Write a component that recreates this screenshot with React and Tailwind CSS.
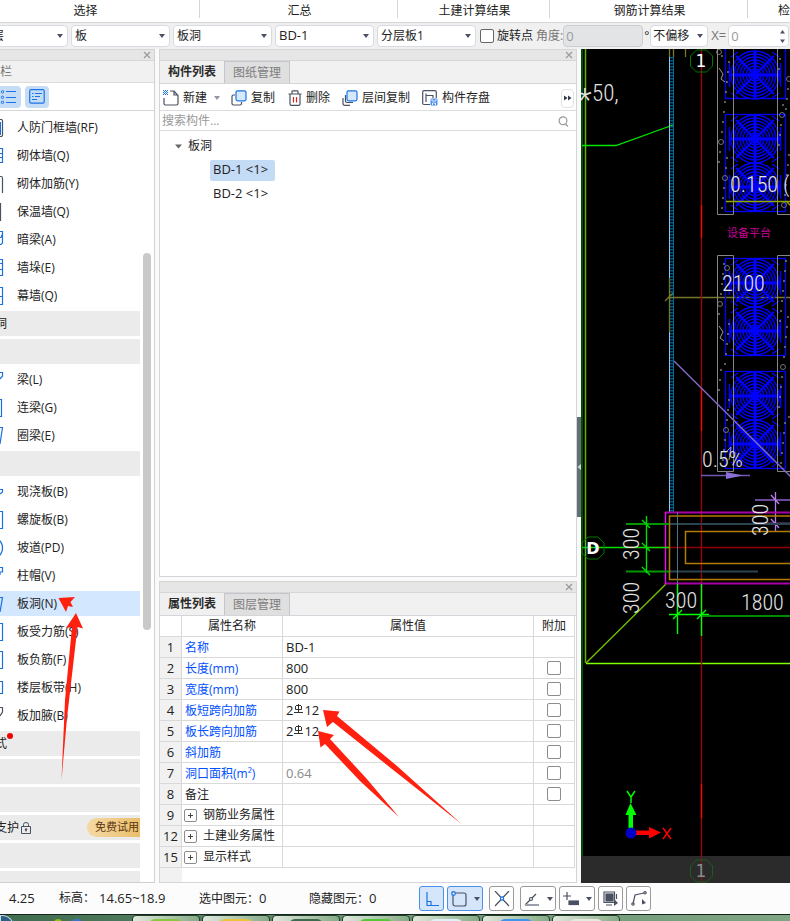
import React from "react";

const ribbonGroups = [
  { label: "选择", box: "w-[200px] pr-[28px] justify-center border-r" },
  { label: "汇总", box: "w-[198px] pl-[2px] justify-center border-r" },
  { label: "土建计算结果", box: "w-[152px] pl-[2px] justify-center border-r" },
  { label: "钢筋计算结果", box: "w-[198px] pl-[2px] justify-center border-r" },
  { label: "检", box: "flex-1 pl-[30px] justify-start" },
];

function Caret({ className = "" }) {
  return (
    <svg width="6" height="4" viewBox="0 0 6 4" className={`shrink-0 pointer-events-none ${className}`}>
      <path d="M0 0H6L3 4Z" fill="#4a5162" />
    </svg>
  );
}

function Combo({ label, value, box = "w-[99px]", pad = "pl-[3px]", latin = false }) {
  return (
    <span className={`relative flex h-[22px] shrink-0 items-center rounded border border-[#d8dbe2] bg-white ${box}`}>
      <select
        aria-label={label}
        defaultValue={value}
        className={`h-full w-full appearance-none bg-transparent pr-4 text-[#222] outline-none ${pad} ${latin ? "text-[13px]" : "text-xs"}`}
      >
        <option>{value}</option>
      </select>
      <Caret className="absolute right-[4px]" />
    </span>
  );
}

function CloseMark() {
  return (
    <button aria-label="关闭" className="flex h-full w-[14px] items-center justify-center">
      <svg width="8" height="8" viewBox="0 0 8 8">
        <path d="M1 1L7 7M7 1L1 7" stroke="#999" strokeWidth="1.2" />
      </svg>
    </button>
  );
}

function TitleStrip() {
  return (
    <div className="flex h-[12px] shrink-0 items-center justify-end border-y border-[#d6d6d6] bg-[#e6e6e6]">
      <CloseMark />
    </div>
  );
}

function Tabs({ items }) {
  return (
    <div className="flex h-[23px] shrink-0 border-b border-[#d4d5da] bg-[#f1f1f1]">
      <button className="w-[65px] border-r border-[#c4c5cc] bg-[#f0f0f0] text-xs font-bold text-[#2b2b2b]">{items[0]}</button>
      <button className="w-[65px] border-t border-r border-[#c4c5cc] bg-[#dfdfdf] text-xs text-[#7d7d7d]">{items[1]}</button>
    </div>
  );
}

/* ---------- Navigation tree ---------- */

const B = "#1a6fe0";
const D = "#4a5162";
const navRows = [
  { t: "人防门框墙(RF)", c: D, d: "M-2 .5H1Q2.500 .5 2.500 2V16Q2.500 17.500 1 17.500H-2", bar: true },
  { t: "砌体墙(Q)", c: B, d: "M-2 1.500H2.500V15.500H-2M-2 6.500H2.500M-2 10.500H2.500" },
  { t: "砌体加筋(Y)", c: D, d: "M-2 1.500H1Q2.500 1.500 2.500 3V18" },
  { t: "保温墙(Q)", c: D, d: "M.5 0V18" },
  { t: "暗梁(A)", c: B, d: "M-2 .5H2.500V8M-2 6.500H1L2.500 3M-2 13.500H1L2.500 12V8" },
  { t: "墙垛(E)", c: B, d: "M-2 .5H2.500V16.500H-2M-2 4.500H2.500M-2 10.500H2.500" },
  { t: "幕墙(Q)", c: B, d: "M-2 .5H2.500V17.500H-2M-2 9.500H2.500" },
  { g: "洞" },
  { g: "" },
  { t: "梁(L)", c: B, d: "M-2 1.500H2.500V5L0 8" },
  { t: "连梁(G)", c: B, d: "M-2 .5H1.500V17.500H-2" },
  { t: "圈梁(E)", c: B, d: "M-2 .5H2.500L0 17" },
  { g: "" },
  { t: "现浇板(B)", c: B, d: "M-2 6.500H2.500V9L0 11" },
  { t: "螺旋板(B)", c: B, d: "M-2 .5H2.500V17.500H-2" },
  { t: "坡道(PD)", c: B, d: "M-1 1Q2.500 4 2.500 9T-1 17" },
  { t: "柱帽(V)", c: B, d: "M-2 .5H2.500V5H0V8" },
  { t: "板洞(N)", c: B, d: "M-2 2.500H2.500L0 17", on: true },
  { t: "板受力筋(S)", c: B, d: "M-2 .5H2.500V17.500H-2" },
  { t: "板负筋(F)", c: B, d: "M-2 .5H2.500V17.500H-2" },
  { t: "楼层板带(H)", c: B, d: "M-2 2.500H2.500V14.500H-2" },
  { t: "板加腋(B)", c: D, d: "M-2 .5H2.500V5L0 9" },
  { g: "式", dot: true },
  { g: "" },
  { g: "" },
  { g: "支护", lock: true },
  { g: "" },
  { g: "" },
];

function NavRow({ row }) {
  if (row.g !== undefined) {
    return (
      <li className="mb-[3px] flex h-[25px] shrink-0 items-center overflow-hidden bg-[#ebebeb]">
        <button className="relative -ml-[5px] flex h-full flex-1 items-center text-left">
          {row.g}
          {row.dot && <span className="absolute left-[12px] top-[2px] h-[6px] w-[6px] rounded-full bg-[#f00000]" />}
          {row.lock && (
            <svg width="10" height="12" viewBox="0 0 10 12" className="ml-[2px]">
              <path d="M.5 4.500H9.500V11.500H.5ZM2.500 4.500V2.500Q2.500 .5 5 .5T7.500 2.500V4.500M5 7V9.500" fill="none" stroke={D} />
              <circle cx="5" cy="7.500" r="1.200" fill={D} />
            </svg>
          )}
        </button>
        {row.lock && (
          <button className="h-[19px] w-[53px] rounded-l-full bg-linear-to-r from-[#f5d9a4] to-[#eabf6a] pl-[8px] text-left text-[11px] whitespace-nowrap text-[#5b3410]">
            免费试用
          </button>
        )}
      </li>
    );
  }
  return (
    <li className={`mb-[3px] h-[25px] shrink-0 ${row.on ? "bg-[#d3e7fe]" : ""}`}>
      <button className="flex h-full w-full items-center gap-[13px] text-left whitespace-nowrap">
        <svg width="4" height="18" viewBox="0 0 4 18" className="shrink-0">
          {row.bar && <rect x="0" y="3" width="1" height="13" fill={B} />}
          <path d={row.d} fill="none" stroke={row.c} strokeWidth="1.200" />
        </svg>
        {row.t}
      </button>
    </li>
  );
}

function Sidebar() {
  return (
    <aside className="flex w-[155px] shrink-0 flex-col overflow-hidden border-r border-b border-[#d0d0d0] bg-white text-xs">
      <TitleStrip />
      <div className="flex h-[22px] shrink-0 items-center border-b border-[#dcdcdc] bg-[#f1f1f1] text-[#777]">栏</div>
      <div className="flex h-[28px] shrink-0 items-center gap-[4px] border-b border-[#d6d6d6]">
        <button aria-label="列表" className="flex h-[22px] w-[21px] items-center rounded-r bg-[#c5dcf6]">
          <svg width="17" height="14" viewBox="0 0 17 14" fill="none" stroke="#1a73e8">
            <path d="M6 1.500H16M6 7.500H16M6 12.500H16" strokeWidth="1.200" />
            <circle cx="2.500" cy="1.800" r="1.200" />
            <circle cx="2.500" cy="7.300" r="1.200" />
            <circle cx="2.500" cy="12.300" r="1.200" />
          </svg>
        </button>
        <button aria-label="详情" className="flex h-[22px] w-[24px] items-center justify-center rounded bg-[#c5dcf6]">
          <svg width="16" height="15" viewBox="0 0 16 15" fill="none" stroke="#1a73e8" strokeWidth="1.200">
            <rect x=".7" y=".7" width="14.500" height="13.500" rx="1.500" />
            <path d="M3 4.500H4.500M6 4.500H13M3 7.500H4.500M6 7.500H11M3 10.500H8" />
          </svg>
        </button>
      </div>
      <div className="flex min-h-0 flex-1">
        <ul className="flex min-w-0 flex-1 flex-col overflow-hidden pt-[4px]">
          {navRows.map((r, i) => (
            <NavRow key={i} row={r} />
          ))}
        </ul>
        <div className="w-[14px] shrink-0 pl-[3px] pt-[142px]">
          <div className="h-[377px] w-[8px] rounded-full bg-[#c9c9c9]" />
        </div>
      </div>
    </aside>
  );
}

/* ---------- Component list ---------- */

function IconNew() {
  return (
    <svg width="16" height="16" viewBox="0 0 16 16" fill="none">
      <path d="M1 8V13.500Q1 15 2.500 15H13.500Q15 15 15 13.500V5.500L11 1H7M11 1V5H15" stroke={D} strokeWidth="1.200" />
      <path d="M0 .5H5M0 2.500H5M0 4.500H5" stroke="#1a73e8" strokeDasharray="1 1" />
      <path d="M1 1.500H5M1 3.500H5" stroke="#1a73e8" strokeDasharray="1 1" />
    </svg>
  );
}

function IconCopy({ triple = false }) {
  return (
    <svg width="16" height="16" viewBox="0 0 16 16" fill="none">
      <path d={triple ? "M3.500 5V11Q3.500 12.500 5 12.500H11M1 8V13.500Q1 15.300 3 15.300H8" : "M4 5H2.500Q1 5 1 6.500V13.500Q1 15 2.500 15H9Q10.500 15 10.500 13.500V12"} stroke={D} strokeWidth="1.200" />
      <rect x="5" y=".8" width="10" height="10" rx="1.500" fill="#d8e8fb" stroke="#1a73e8" strokeWidth="1.200" />
    </svg>
  );
}

function IconTrash() {
  return (
    <svg width="14" height="16" viewBox="0 0 14 16" fill="none">
      <path d="M.5 4H13.500M4 4V1.500Q4 .8 5 .8H9Q10 .8 10 1.500V4M2 4V14Q2 15.300 3.300 15.300H10.700Q12 15.300 12 14V4" stroke={D} strokeWidth="1.200" />
      <path d="M5.500 7V12.500M8.500 7V12.500" stroke="#e02020" strokeWidth="1.200" />
    </svg>
  );
}

function IconStore() {
  return (
    <svg width="16" height="16" viewBox="0 0 16 16" fill="none">
      <path d="M8 14.500H2Q.7 14.500 .7 13V2Q.7 .7 2 .7H13Q14.300 .7 14.300 2V8M4 12V3.500M4 5.500H11V8" stroke={D} strokeWidth="1.200" />
      <rect x="8.500" y="8.500" width="7" height="7" rx="1" fill="#4a90e8" />
      <path d="M10 9V11H14V9M10.500 15V13H13.500V15" stroke="#fff" strokeWidth=".8" />
    </svg>
  );
}

function Tool({ icon, children, className = "" }) {
  return (
    <button className={`flex items-center gap-[4px] whitespace-nowrap ${className}`}>
      {icon}
      {children}
    </button>
  );
}

function ComponentList() {
  return (
    <section className="flex min-h-0 flex-1 flex-col border-x border-b border-[#d4d5da] bg-white text-xs">
      <TitleStrip />
      <Tabs items={["构件列表", "图纸管理"]} />
      <div className="flex h-[27px] shrink-0 items-center border-b border-[#dcdcdc] pt-[2px] pl-[3px] pr-[2px]">
        <Tool icon={<IconNew />}>新建</Tool>
        <Caret className="ml-[7px] opacity-60" />
        <Tool icon={<IconCopy />} className="ml-[11px]">复制</Tool>
        <Tool icon={<IconTrash />} className="ml-[13px]">删除</Tool>
        <Tool icon={<IconCopy triple />} className="ml-[12px]">层间复制</Tool>
        <Tool icon={<IconStore />} className="ml-[12px]">构件存盘</Tool>
        <button aria-label="更多" className="ml-auto flex h-[19px] w-[13px] items-center justify-center rounded border border-[#e2e2e2]">
          <svg width="8" height="6" viewBox="0 0 8 6">
            <path d="M0 .5L3.500 3L0 5.500ZM4 .5L7.500 3L4 5.500Z" fill="#333b4a" />
          </svg>
        </button>
      </div>
      <label className="flex h-[20px] shrink-0 items-center border-b border-[#dcdcdc] pt-px pl-[2px] pr-[7px]">
        <input aria-label="搜索构件" placeholder="搜索构件..." className="min-w-0 flex-1 outline-none placeholder:text-[#999]" />
        <svg width="11" height="11" viewBox="0 0 11 11" fill="none" stroke="#999" strokeWidth="1.200">
          <circle cx="5" cy="4.800" r="3.900" />
          <path d="M7.500 8L10 10.500" />
        </svg>
      </label>
      <ul className="pt-[3px]">
        <li>
          <button className="flex h-6 items-center gap-[6px] pl-[15px]">
            <svg width="7" height="5" viewBox="0 0 7 5"><path d="M0 .5H7L3.500 4.500Z" fill="#666" /></svg>
            板洞
          </button>
          <ul className="pl-[50px] text-[13px]">
            <li className="flex h-6 items-center">
              <button className="flex h-[21px] w-[65px] items-center rounded-xs bg-[#c3dbf5] px-[3px]">BD-1 &lt;1&gt;</button>
            </li>
            <li className="flex h-6 items-center">
              <button className="px-[3px]">BD-2 &lt;1&gt;</button>
            </li>
          </ul>
        </li>
      </ul>
    </section>
  );
}

/* ---------- Property grid ---------- */

function Rebar() {
  return (
    <svg width="9" height="10" viewBox="0 0 9 10" className="mx-px inline-block align-[1px]" fill="none" stroke="#333">
      <path d="M4.500 0V9M1.500 2V5.500H7.500V2M2 1.500H7M0 8.500H9" />
    </svg>
  );
}

const props = [
  { n: 1, k: "名称", v: "BD-1", blue: true },
  { n: 2, k: "长度(mm)", v: "800", blue: true, c: true },
  { n: 3, k: "宽度(mm)", v: "800", blue: true, c: true },
  { n: 4, k: "板短跨向加筋", v: <>2<Rebar />12</>, blue: true, c: true },
  { n: 5, k: "板长跨向加筋", v: <>2<Rebar />12</>, blue: true, c: true },
  { n: 6, k: "斜加筋", v: "", blue: true, c: true },
  { n: 7, k: "洞口面积(m²)", v: "0.64", blue: true, c: true, dim: true },
  { n: 8, k: "备注", v: "", c: true },
  { n: 9, k: "钢筋业务属性", v: "", plus: true },
  { n: 12, k: "土建业务属性", v: "", plus: true },
  { n: 15, k: "显示样式", v: "", plus: true },
];

function PropertyGrid() {
  return (
    <section className="flex shrink-0 flex-col border-x border-b border-[#d4d5da] bg-white text-xs">
      <TitleStrip />
      <Tabs items={["属性列表", "图层管理"]} />
      <div className="pr-px">
        <table className="w-full table-fixed border-separate border-spacing-0 [&_td]:border-r [&_td]:border-b [&_td]:border-[#d9d9d9] [&_td]:p-0 [&_th]:border-r [&_th]:border-b [&_th]:border-[#d9d9d9] [&_th]:p-0">
          <thead>
            <tr className="h-[21px]">
              <th aria-label="序号" className="w-[22px]" />
              <th className="w-[101px] font-normal">属性名称</th>
              <th className="font-normal">属性值</th>
              <th className="w-[41px] font-normal">附加</th>
            </tr>
          </thead>
          <tbody>
            {props.map((p) => (
              <tr key={p.n} className="h-[21px]">
                <td className="bg-[#f1f1f1] text-center text-[13px] leading-5">{p.n}</td>
                <td className={`whitespace-nowrap ${p.blue ? "text-[#0050ff]" : ""}`}>
                  <div className={`flex h-5 items-center ${p.plus ? "pl-[2px]" : "pt-[2px] pl-[3px]"}`}>
                    {p.plus && (
                      <button aria-label={`展开${p.k}`} className="mr-[6px] flex h-[13px] w-[13px] items-center justify-center rounded-xs border border-[#8c8c8c]">
                        <svg width="5" height="5" viewBox="0 0 5 5"><path d="M0 2.500H5M2.500 0V5" stroke="#444" /></svg>
                      </button>
                    )}
                    {p.k}
                  </div>
                </td>
                <td className={`pl-[3px]! text-[13px] leading-5 ${p.dim ? "text-[#8a8a8a]" : ""}`}>
                  <div className="h-5">{p.v}</div>
                </td>
                <td>
                  <div className="flex h-5 items-center justify-center">
                    {p.c && <input type="checkbox" aria-label={`${p.k}附加`} className="h-[14px] w-[14px] appearance-none rounded-xs border border-[#8c8c8c] bg-white" />}
                  </div>
                </td>
              </tr>
            ))}
          </tbody>
        </table>
        <div className="h-[14px] w-[22px] bg-[#f1f1f1]" />
      </div>
    </section>
  );
}

/* ---------- Drawing area ---------- */

const fanRings = [3, 6, 9, 12, 15, 18, 21, 24];

function Fan({ cy }) {
  return (
    <g fill="none" stroke="#0000ff" strokeWidth="1.400">
      {fanRings.map((r) => (
        <circle key={r} cx="755" cy={cy} r={r} />
      ))}
      <path d={`M730 ${cy}H780M755 ${cy - 24}V${cy + 24}`} strokeWidth="3" />
      <path d={`M736 ${cy - 19}L774 ${cy + 19}M774 ${cy - 19}L736 ${cy + 19}`} strokeWidth="2" />
      <path d={`M731 ${cy - 18}L738 ${cy - 23}M779 ${cy - 18}L772 ${cy - 23}M731 ${cy + 18}L738 ${cy + 23}M779 ${cy + 18}L772 ${cy + 23}M729.500 ${cy - 12}V${cy + 12}M780.500 ${cy - 12}V${cy + 12}`} />
      <circle cx="755" cy={cy} r="4" fill="#0000ff" />
    </g>
  );
}

const specks = [];
for (let i = 0; i < 92; i++) {
  const right = i % 2;
  const x = (right ? 779 : 719) + ((i * 37) % 11);
  const y = 52 + ((i * 53) % 414);
  if (y < 210 || y > 258) specks.push([x, y, i % 9 === 0 ? 2.5 : 0.7]);
}

const octagon = (cx, cy) =>
  `M${cx - 5} ${cy - 11}H${cx + 5}L${cx + 11} ${cy - 5}V${cy + 5}L${cx + 5} ${cy + 11}H${cx - 5}L${cx - 11} ${cy + 5}V${cy - 5}Z`;

const cadFont = "font-['Roboto_Condensed','Liberation_Sans_Narrow','Roboto',sans-serif] font-light";

function Canvas() {
  return (
    <div className="flex min-w-0 flex-1 flex-col overflow-hidden bg-black">
      <svg className="min-h-0 w-full flex-1 overflow-hidden" role="img" aria-label="平面图">
        <g transform="translate(-581 -49)" fill="none">
          <path d="M582 49V2000" stroke="#004d00" strokeWidth="2" />
          <path d="M585.500 49V663" stroke="#65b300" strokeWidth="1.500" />
          <path d="M586 663.500H2400" stroke="#80ff00" strokeWidth="1.300" />
          <path d="M586 663L666 584" stroke="#74c400" strokeWidth="1.300" />
          <path d="M582 145.500H616L673 125" stroke="#00e600" strokeWidth="1.300" />

          <path d="M671.500 57V512" stroke="#00597d" strokeWidth="3" strokeDasharray="1.500 1.500" />
          <path d="M673.500 57V512" stroke="#006c98" />
          <path d="M669.500 57V278M669.500 332V512" stroke="#8cc4ff" />
          <path d="M669.500 49V57M673.500 49V57M685.500 49V57M669.500 278V332M668 297.500H2400M665 301L673 293" stroke="#76762c" strokeWidth="1.300" />
          <path d="M701.500 49V2000" stroke="#a80000" strokeWidth="1.300" />
          <path d="M701.500 205V238M701.500 388V431M701.500 784V818" stroke="#ff0000" strokeWidth="1.300" />
          <path d={octagon(701.5, 61)} stroke="#007800" />

          <g stroke="#0000ff" strokeWidth="1.300">
            <path d="M725.500 49V98.500H785.500V49" />
            <rect x="725.500" y="114.500" width="60" height="97" />
            <rect x="725.500" y="258.500" width="60" height="97" />
            <rect x="725.500" y="371.500" width="60" height="97" />
          </g>
          {[75, 139, 187, 283, 331, 396, 444].map((cy) => (
            <Fan key={cy} cy={cy} />
          ))}
          <path d="M717.500 49V214.500H733.500V49M777.500 49V214.500H2400M717.500 255.500H733.500V471.500H717.500ZM2400 255.500H777.500V471.500H2400" stroke="#858585" />
          {specks.map(([x, y, r], i) => (
            <circle key={i} cx={x} cy={y} r={r} stroke="#8e8e8e" strokeWidth=".8" />
          ))}
          <path d="M719 68L723 74L721 79L725 82M719 326L723 332L720 338L724 341M726 452L731 447L729 460" stroke="#9a9a9a" />
          <path d="M726 201.500H2400M786 201L792 207" stroke="#92a600" strokeWidth="1.300" />
          <path d="M674 361L900 585" stroke="#8468c8" strokeWidth="1.400" />
          <path d="M701 475.500H750" stroke="#6f58b0" strokeWidth="1.400" />
          <path d="M726 472V479L743 475.500Z" fill="#8a70d6" />
          <path d="M755 500H2400M755 523.500H2400" stroke="#6a479a" strokeWidth="2" />
          <path d="M775.500 492V532M771 495L779 504M771 519L779 528" stroke="#b77cf0" strokeWidth="1.300" />

          <path d="M669 524H2400M669 571.500H758" stroke="#2b4450" strokeWidth="2" />
          <path d="M620 547.500H2400" stroke="#900000" strokeWidth="1.300" />
          <path d="M2400 516H669.500V579.500H2400M2400 531.500H685.500V563.500H2400" stroke="#b27b00" strokeWidth="1.500" />
          <path d="M665 512.500H2400M665 583.500H2400" stroke="#a800a8" strokeWidth="2" />
          <path d="M665.500 512V584" stroke="#ff00ff" strokeWidth="1.300" />
          <path d="M677.500 512V584" stroke="#4f7486" />
          <path d="M626 524H669M626 571.500H669" stroke="#009600" strokeWidth="2" />
          <path d="M582 547.500H669M646.500 516V573M642 520L650 528M642 543L650 551M642 567L650 575" stroke="#00e000" strokeWidth="1.400" />
          <path d="M677.500 584V634M701.500 584V636M669 614.500H709M673 619L682 610M697 619L706 610" stroke="#00ff00" strokeWidth="1.400" />
          <path d="M702 616H2400" stroke="#008c00" strokeWidth="2" />
          <path d={octagon(593, 548)} stroke="#007800" />

          <g fill="#e4e4e4" className={cadFont}>
            <text x="592" y="101" fontSize="23">50,</text>
            <text x="578" y="110" fontSize="32">*</text>
            <text x="730" y="192" fontSize="22">0.150 (</text>
            <text x="722" y="291" fontSize="22">2100</text>
            <text x="702" y="467" fontSize="22">0.5%</text>
            <text x="665" y="608" fontSize="22">300</text>
            <text x="741" y="610" fontSize="22">1800</text>
            <text transform="translate(639 560) rotate(-90)" fontSize="22">300</text>
            <text transform="translate(639 614) rotate(-90)" fontSize="22">300</text>
            <text transform="translate(768 536) rotate(-90)" fontSize="22">300</text>
          </g>
          <g fill="#ffffff" textAnchor="middle" fontSize="17" className="font-['DejaVu_Sans',sans-serif]">
            <text x="701" y="67">1</text>
            <text x="593" y="554" fontSize="16" fontWeight="700">D</text>
          </g>
          <text x="727" y="237" fill="#c8009a" fontSize="11" className="font-['Noto_Sans_CJK_SC',sans-serif]">设备平台</text>

          <path d="M628.500 829V815H625.500L630.500 803L636.500 815H633V829Z" fill="#00ff00" />
          <path d="M636 830.500H649V827L661 832.500L649 838.500V835H636Z" fill="#ff0000" />
          <circle cx="631" cy="833" r="5.500" fill="#0000c8" />
          <path d="M627 791L631 797V803M635 791L631 797" stroke="#00ff00" strokeWidth="1.500" />
          <path d="M663 828L671 839M671 828L663 839" stroke="#ff0000" strokeWidth="1.500" />
        </g>
      </svg>
      <svg className="h-[27px] w-full shrink-0 bg-[#2b2b2b]">
        <path d="M120.500 0V27" stroke="#8a1010" />
        <path d={octagon(120.5, 15)} fill="none" stroke="#1f5a1f" />
        <text x="120" y="21" fill="#8a8a8a" fontSize="17" textAnchor="middle" className="font-['DejaVu_Sans',sans-serif]">1</text>
      </svg>
    </div>
  );
}

/* ---------- Status bar ---------- */

function StatusButton({ label, wide = false, on = false, menu = false, children }) {
  return (
    <button
      aria-label={label}
      className={`flex h-[25px] shrink-0 items-center justify-center gap-[7px] rounded-[3px] border ${wide ? "w-[36px]" : "w-[25px]"} ${on ? "border-[#4a90e8] bg-[#d5e5fa]" : "border-[#9a9a9a] bg-white"}`}
    >
      <svg width="16" height="16" viewBox="0 0 16 16" fill="none" stroke={D} strokeWidth="1.200" className="shrink-0">
        {children}
      </svg>
      {menu && <Caret />}
    </button>
  );
}

function StatusBar() {
  return (
    <footer className="flex h-[31px] shrink-0 items-center bg-[#fcfcfc] text-xs whitespace-nowrap">
      <span className="w-[59px] pl-[9px] text-[13px]">4.25</span>
      <span className="flex w-[140px] items-center gap-[4px]">标高： <span className="text-[13px]">14.65~18.9</span></span>
      <span className="w-[110px]">选中图元：<span className="text-[13px]">0</span></span>
      <span className="w-[110px]">隐藏图元：<span className="text-[13px]">0</span></span>
      <div className="flex items-center gap-[3px]">
        <StatusButton label="正交" on>
          <path d="M3 1V14.500H15M3 10.500H7V14.500" stroke="#1a73e8" />
        </StatusButton>
        <StatusButton label="对象捕捉" on wide menu>
          <rect x="2" y="2" width="13" height="13" rx="2" />
          <circle cx="2.500" cy="2.500" r="1.800" fill="#d5e5fa" stroke="#1a73e8" />
        </StatusButton>
        <span className="w-0" />
        <StatusButton label="交点">
          <path d="M1 0L15 15M15 0L1 15" />
          <circle cx="8" cy="7.500" r="1.600" fill="#fff" stroke="#1a73e8" />
        </StatusButton>
        <span className="w-0" />
        <StatusButton label="极轴" wide menu>
          <path d="M1 14L12 3" />
          <path d="M1 14H15" stroke="#9aa0ab" strokeWidth="2" />
          <circle cx="7" cy="8" r="1.500" fill="#fff" />
        </StatusButton>
        <StatusButton label="动态输入" wide menu>
          <path d="M0 5H8M4 1V9" />
          <rect x="6" y="10" width="10" height="3.500" fill={D} />
        </StatusButton>
        <StatusButton label="选择框">
          <rect x="3" y="3" width="7" height="7" fill={D} />
          <path d="M1 1H11.500V11.500H1ZM13.500 3V8M3 14H9" />
          <path d="M11 8L15 12L11 15Z" fill={D} stroke="none" />
        </StatusButton>
        <StatusButton label="折线">
          <path d="M2 13L4 4L13 2" />
          <circle cx="2" cy="13" r="1.200" fill="#fff" />
          <circle cx="14" cy="1.800" r="1.200" fill="#fff" />
          <path d="M11 8L15 12L11 13.500Z" fill={D} stroke="none" />
        </StatusButton>
      </div>
    </footer>
  );
}

const tasks = ["bg-[#8cc63f]", "bg-[#e8c53a]", "bg-[#3f6b4c]", "bg-[#55c83a]", "bg-[#dff0f8]", "bg-[#3f96f0]", "bg-[#e6eae0]"];

function Taskbar() {
  return (
    <div className="flex h-[7px] shrink-0 overflow-hidden border-t border-[#15251c] bg-linear-to-r from-[#3f6b4f] via-[#6b9474] to-[#7fa584]">
      <div className="flex w-[132px] gap-[10px]">
        <span className="h-[12px] w-[14px] rounded-tr-full border border-[#c8dce8] bg-[#2d5f84]" />
        <span className="ml-[30px] mt-[4px] h-2 w-[8px] rounded-full bg-[#a0b818]" />
        <span className="mt-[4px] h-2 w-[10px] rounded-full bg-[#3477d0]" />
      </div>
      <div className="flex gap-[2px]">
        {tasks.map((c, i) => (
          <span key={i} className="flex h-[8px] w-[68px] justify-center rounded-t-sm border border-[#21402c] bg-linear-to-r from-[#dfe8dd] to-[#86ab86]">
            <span className={`mt-[3px] h-[6px] w-[34px] rounded-t-full ${c}`} />
          </span>
        ))}
      </div>
    </div>
  );
}

function Markup() {
  return (
    <svg className="pointer-events-none absolute inset-0 h-full w-full" aria-hidden="true">
      <g fill="#ff2010">
        <path d="M58.500 598L75 597L70.500 602L73 607L68 606L66 612Z" />
        <path d="M76 613L83 628.500L77.500 627L67 718L61.500 780L65 700L72 627L66 628Z" />
        <path d="M323 710L339.500 711.500L337 716L397 766L461.500 824L392 769L333 722L327 727Z" />
        <path d="M318 731L334 735L330 739L366 778L399 817L360 781L325 744L320.500 747.500Z" />
      </g>
    </svg>
  );
}

export default function App() {
  return (
    <div className="relative flex h-screen flex-col overflow-hidden bg-[#f0f0f0] font-['Open_Sans','Noto_Sans_CJK_SC',sans-serif] text-xs text-[#222]">
      <header className="flex h-[23px] shrink-0 items-start overflow-hidden border-b border-[#d6d6d6] bg-white">
        {ribbonGroups.map((g) => (
          <div key={g.label} className={`flex h-[18px] shrink-0 items-end border-[#d6d6d6] leading-[14px] whitespace-nowrap ${g.box}`}>
            {g.label}
          </div>
        ))}
      </header>
      <div className="flex h-[26px] shrink-0 items-center overflow-hidden">
        <div className="-ml-[31px] flex shrink-0 gap-[3px]">
          <Combo label="楼层" value="层" pad="pl-[22px]" />
          <Combo label="构件大类" value="板" />
          <Combo label="构件类型" value="板洞" />
          <Combo label="构件" value="BD-1" latin />
          <Combo label="分层" value="分层板1" />
        </div>
        <label className="ml-[4px] flex shrink-0 items-center gap-[3px]">
          <input type="checkbox" className="h-[14px] w-[14px] appearance-none rounded-xs border border-[#666] bg-white" />
          旋转点
        </label>
        <label className="ml-[3px] flex shrink-0 items-center text-[#777]">
          角度:
          <input defaultValue="0" disabled className="h-[22px] w-[80px] rounded border border-[#c9cdd6] bg-[#e3e4e6] pl-[2px] text-[13px] text-[#999]" />
        </label>
        <span className="w-[7px] shrink-0 pl-px">°</span>
        <Combo label="偏移" value="不偏移" box="w-[58px]" pad="pl-[2px]" />
        <label className="ml-[3px] flex shrink-0 items-center text-[13px] text-[#777]">
          <span className="w-[17px]">X=</span>
          <span className="relative flex items-center">
            <input defaultValue="0" className="h-[22px] w-[61px] rounded border border-[#d8dbe2] bg-white pl-[2px] text-[13px] text-[#999]" />
            <svg width="5" height="13" viewBox="0 0 5 13" className="absolute right-[4px]">
              <path d="M0 3.500L2.500 0L5 3.500ZM0 9.500H5L2.500 13Z" fill="#4a5162" />
            </svg>
          </span>
        </label>
      </div>
      <main className="flex min-h-0 flex-1">
        <Sidebar />
        <div className="w-[4px] shrink-0 bg-[#fafafa]" />
        <div className="flex w-[418px] shrink-0 flex-col gap-[4px] bg-[#fafafa]">
          <ComponentList />
          <PropertyGrid />
        </div>
        <div className="flex w-[4px] shrink-0 flex-col items-center bg-[#fafafa] pt-[368px]">
          <button aria-label="折叠" className="flex h-[100px] w-full items-center justify-center bg-[#636e78]">
            <svg width="4" height="6" viewBox="0 0 4 6"><path d="M4 0V6L.5 3Z" fill="#d0d4d8" /></svg>
          </button>
        </div>
        <Canvas />
      </main>
      <StatusBar />
      <Taskbar />
      <Markup />
    </div>
  );
}
